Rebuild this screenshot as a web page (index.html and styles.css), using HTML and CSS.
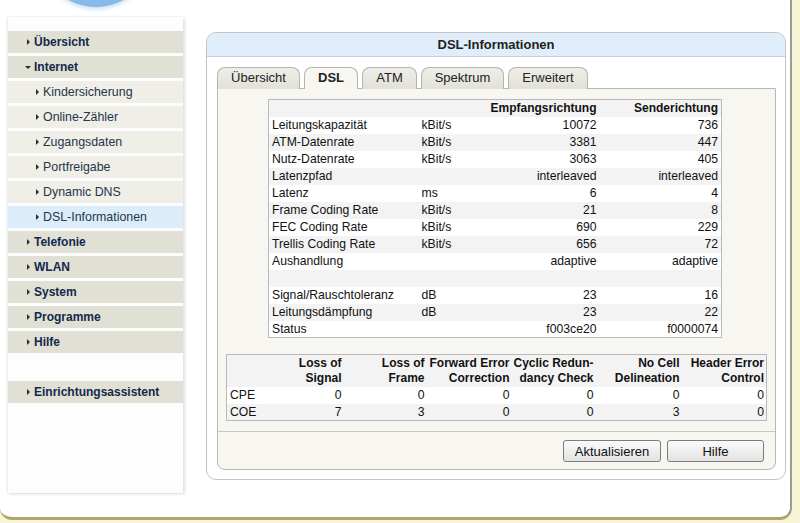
FILE: index.html
```html
<!DOCTYPE html>
<html lang="de">
  <head>
    <meta charset="UTF-8" />
    <title>DSL-Informationen</title>
    <link rel="stylesheet" href="styles.css">
  </head>
  <body>
    <div class="frame">
      <div class="logo"></div>
      <div class="layout">
        <nav class="menu">
          <a class="menu-item main" href="#">Übersicht</a>
          <a class="menu-item main open" href="#">Internet</a>
          <a class="menu-item sub" href="#">Kindersicherung</a>
          <a class="menu-item sub" href="#">Online-Zähler</a>
          <a class="menu-item sub" href="#">Zugangsdaten</a>
          <a class="menu-item sub" href="#">Portfreigabe</a>
          <a class="menu-item sub" href="#">Dynamic DNS</a>
          <a class="menu-item sub active" href="#">DSL-Informationen</a>
          <a class="menu-item main" href="#">Telefonie</a>
          <a class="menu-item main" href="#">WLAN</a>
          <a class="menu-item main" href="#">System</a>
          <a class="menu-item main" href="#">Programme</a>
          <a class="menu-item main" href="#">Hilfe</a>
          <a class="menu-item main wizard" href="#">Einrichtungsassistent</a>
        </nav>

        <div class="panel">
          <div class="panel-head">DSL-Informationen</div>
          <div class="panel-body">
            <ul class="tabs">
              <li class="tab tab-overview">Übersicht</li>
              <li class="tab tab-dsl active">DSL</li>
              <li class="tab tab-atm">ATM</li>
              <li class="tab tab-spectrum">Spektrum</li>
              <li class="tab tab-extended">Erweitert</li>
            </ul>
            <div class="tab-content">
              <table class="dsl">
                <colgroup>
                  <col style="width: 150px" />
                  <col style="width: 60px" />
                  <col style="width: 121px" />
                  <col style="width: 122px" />
                </colgroup>
                <tr class="head">
                  <th></th><th></th>
                  <th>Empfangsrichtung</th><th>Senderichtung</th>
                </tr>
                <tr><td>Leitungskapazität</td><td>kBit/s</td><td>10072</td><td>736</td></tr>
                <tr><td>ATM-Datenrate</td><td>kBit/s</td><td>3381</td><td>447</td></tr>
                <tr><td>Nutz-Datenrate</td><td>kBit/s</td><td>3063</td><td>405</td></tr>
                <tr><td>Latenzpfad</td><td></td><td>interleaved</td><td>interleaved</td></tr>
                <tr><td>Latenz</td><td>ms</td><td>6</td><td>4</td></tr>
                <tr><td>Frame Coding Rate</td><td>kBit/s</td><td>21</td><td>8</td></tr>
                <tr><td>FEC Coding Rate</td><td>kBit/s</td><td>690</td><td>229</td></tr>
                <tr><td>Trellis Coding Rate</td><td>kBit/s</td><td>656</td><td>72</td></tr>
                <tr><td>Aushandlung</td><td></td><td>adaptive</td><td>adaptive</td></tr>
                <tr><td></td><td></td><td></td><td></td></tr>
                <tr><td>Signal/Rauschtoleranz</td><td>dB</td><td>23</td><td>16</td></tr>
                <tr><td>Leitungsdämpfung</td><td>dB</td><td>23</td><td>22</td></tr>
                <tr><td>Status</td><td></td><td>f003ce20</td><td>f0000074</td></tr>
              </table>

              <table class="errors">
                <colgroup>
                  <col style="width: 33px" />
                  <col style="width: 84px" />
                  <col style="width: 83px" />
                  <col style="width: 85px" />
                  <col style="width: 84px" />
                  <col style="width: 86px" />
                  <col style="width: 85px" />
                </colgroup>
                <tr class="head">
                  <th></th>
                  <th>Loss of<br />Signal</th>
                  <th>Loss of<br />Frame</th>
                  <th>Forward Error<br />Correction</th>
                  <th>Cyclic Redun-<br />dancy Check</th>
                  <th>No Cell<br />Delineation</th>
                  <th>Header Error<br />Control</th>
                </tr>
                <tr><td>CPE</td><td>0</td><td>0</td><td>0</td><td>0</td><td>0</td><td>0</td></tr>
                <tr><td>COE</td><td>7</td><td>3</td><td>0</td><td>0</td><td>3</td><td>0</td></tr>
              </table>

              <div class="buttons">
                <button class="btn">Aktualisieren</button>
                <button class="btn">Hilfe</button>
              </div>
            </div>
          </div>
        </div>
      </div>
    </div>
  </body>
</html>
```

FILE: styles.css
```css
* {
  margin: 0;
  padding: 0;
  box-sizing: border-box;
}

body {
  background: #f8f4d6;
  font-family: "Liberation Sans", Arial, sans-serif;
  font-size: 12px;
  color: #000;
  overflow: hidden;
}

/* Outer page frame */
.frame {
  width: 792px;
  height: 520px;
  background: #fff;
  border-right: 2px solid #9c9c94;
  border-bottom: 3px solid #b0a56c;
  border-radius: 0 0 12px 12px;
  overflow: hidden;
}

.logo {
  width: 116px;
  height: 116px;
  margin: -109px 0 0 38px;
  border-radius: 50%;
  background: radial-gradient(circle at 50% 30%, #d6ebfb 0%, #8fc0ea 70%, #6ea9de 100%);
  box-shadow: 0 2px 4px rgba(110, 160, 220, 0.4);
}

.layout {
  display: flex;
  align-items: flex-start;
  padding-left: 8px;
  margin-top: 10px;
}

/* Sidebar menu */
.menu {
  width: 175px;
  height: 476px;
  padding-top: 14px;
  background: #fdfdfd;
  box-shadow: -1px 0 2px rgba(0, 0, 0, 0.1), 2px 1px 3px rgba(0, 0, 0, 0.12);
  display: flex;
  flex-direction: column;
}

.menu-item {
  display: flex;
  align-items: center;
  height: 22px;
  margin-bottom: 3px;
  text-decoration: none;
  font-size: 12px;
}

.menu-item::before {
  content: "";
  width: 0;
  height: 0;
  border-left: 3px solid #2c2c2c;
  border-top: 3px solid transparent;
  border-bottom: 3px solid transparent;
  margin-right: 4px;
}

.menu-item.main {
  background: #e1e0d5;
  color: #13294b;
  font-weight: bold;
  padding-left: 19px;
}

.menu-item.open::before {
  border-top: 3px solid #2c2c2c;
  border-left: 3px solid transparent;
  border-right: 3px solid transparent;
  border-bottom: none;
  margin-left: -2px;
  margin-right: 3px;
}

.menu-item.sub {
  background: #efeee7;
  color: #26364a;
  font-size: 12.4px;
  padding-left: 28px;
}

.menu-item.active {
  background: #dbedfa;
}

.menu-item.wizard {
  margin-top: 25px;
}

/* Main panel */
.panel {
  width: 580px;
  height: 448px;
  margin: 15px 0 0 23px;
  border: 1px solid #c4c4c4;
  border-radius: 10px;
  background: #fff;
  overflow: hidden;
}

.panel-head {
  height: 24px;
  line-height: 23px;
  background: #dfeefa;
  border-bottom: 1px solid #c6d3dd;
  text-align: center;
  font-weight: bold;
  font-size: 13px;
  color: #222;
}

.panel-body {
  padding: 10px 9px 9px 10px;
}

.tabs {
  list-style: none;
  display: flex;
  gap: 4px;
  height: 21px;
}

.tab {
  position: relative;
  height: 22px;
  line-height: 20px;
  text-align: center;
  font-size: 13px;
  color: #222;
  background: linear-gradient(#eeede7, #e2e1d9);
  border: 1px solid #b5b5b0;
  border-bottom: none;
  border-radius: 8px 8px 0 0;
}

.tab-overview { width: 83px; }
.tab-dsl { width: 54px; }
.tab-atm { width: 55px; }
.tab-spectrum { width: 83px; }
.tab-extended { width: 80px; }

.tab.active {
  z-index: 1;
  font-weight: bold;
  background: #f7f6f1;
}

.tab-content {
  height: 382px;
  background: #f7f6f1;
  border: 1px solid #b9b9b4;
  border-radius: 0 0 8px 8px;
}

/* Tables */
table {
  border-collapse: collapse;
  table-layout: fixed;
  background: #fff;
  border: 1px solid #b9b9b9;
}

td,
th {
  height: 17px;
  padding: 0 3px;
  white-space: nowrap;
  font-size: 12px;
  color: #111;
}

td {
  font-size: 12.2px;
}

th {
  text-align: right;
  font-weight: bold;
}

tr:nth-child(odd) {
  background: #f3f3f3;
}

.dsl {
  width: 453px;
  margin: 10px 0 0 50px;
}

.dsl td:nth-child(n+3) {
  text-align: right;
}

.errors {
  width: 540px;
  margin: 16px 0 0 8px;
}

.errors th {
  height: 32px;
  line-height: 15px;
  padding: 0 2px;
}

.errors td {
  text-align: right;
  padding: 0 2px;
}

.errors td:first-child {
  text-align: left;
  padding-left: 3px;
}

/* Buttons */
.buttons {
  display: flex;
  justify-content: flex-end;
  gap: 6px;
  margin-top: 10px;
  padding: 8px 11px 0;
  border-top: 1px solid #c8c8c4;
}

.btn {
  width: 97px;
  height: 22px;
  font-family: "Liberation Sans", Arial, sans-serif;
  font-size: 13px;
  color: #111;
  background: linear-gradient(#fbfbfb, #e3e3e3);
  border: 1px solid #7c7c7c;
  border-radius: 3px;
}

.btn:first-child {
  width: 98px;
}
```
